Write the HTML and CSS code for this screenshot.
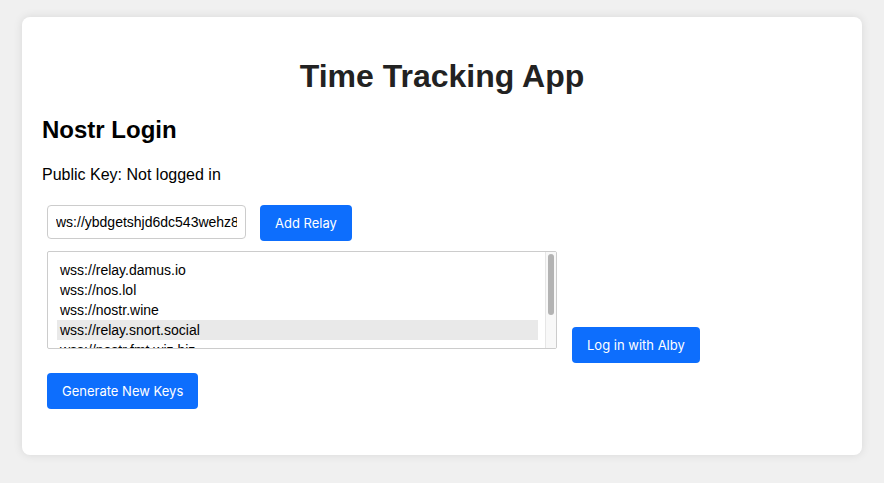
FILE: index.html
```html
<!DOCTYPE html>
<html lang="en">
<head>
  <meta charset="UTF-8">
  <meta name="viewport" content="width=device-width, initial-scale=1.0">
  <title>Time Tracking App</title>
  <link rel="stylesheet" href="styles.css">
</head>
<body>
<div class="container">
  <h1>Time Tracking App</h1>
  <div class="login">
    <h2>Nostr Login</h2>
    <p>Public Key: <span id="pubkey">Not logged in</span></p>
    <div class="relay-row">
      <input type="text" id="relay" value="ws://ybdgetshjd6dc543wehz83jd7">
      <button>Add Relay</button>
    </div>
    <div class="relay-row">
      <div class="relays">
        <div class="relay-list">
          <div class="relay">wss://relay.damus.io</div>
          <div class="relay">wss://nos.lol</div>
          <div class="relay">wss://nostr.wine</div>
          <div class="relay selected">wss://relay.snort.social</div>
          <div class="relay">wss://nostr.fmt.wiz.biz</div>
          <div class="relay">wss://relay.nostr.band</div>
          <div class="relay">wss://eden.nostr.land</div>
        </div>
        <div class="scrollbar"><div class="thumb"></div></div>
      </div>
      <button class="alby">Log in with Alby</button>
    </div>
    <button>Generate New Keys</button>
  </div>
</div>
</body>
</html>
```

FILE: styles.css
```css
body {
  font-family: "Liberation Sans", Arial, sans-serif;
  margin: 0;
  padding: 17px 22px;
  background-color: #f0f0f0;
}
.container {
  padding: 20px 20px 41px;
  background: white;
  border-radius: 8px;
  box-shadow: 0 0 10px rgba(0,0,0,0.1);
}
h1 { text-align: center; color: #222; font-size: 32px; margin: 21px 0; }
h2 { font-size: 24px; margin: 20px 0; }
p { margin: 22px 0 16px; }
.relay-row { display: flex; align-items: flex-start; }
input[type="text"] {
  width: 199px;
  box-sizing: border-box;
  margin: 5px;
  padding: 8px;
  font: 14px "Liberation Sans", Arial, sans-serif;
  border: 1px solid #ccc;
  border-radius: 4px;
}
button {
  margin: 5px 5px 5px 9px;
  padding: 10px 15px;
  height: 36px;
  background-color: #0d6efd;
  color: white;
  font: 13px "Inter", "Liberation Sans", sans-serif;
  border: none;
  border-radius: 4px;
  cursor: pointer;
}
.login > button { margin-left: 5px; }
.relay-row .alby { margin: 81px 5px 5px 10px; }
.relays {
  display: flex;
  width: 510px;
  height: 98px;
  box-sizing: border-box;
  margin: 5px;
  border: 1px solid #ccc;
  border-radius: 2px;
  overflow: hidden;
}
.relay-list {
  flex: 1;
  padding: 8px 7px 8px 9px;
  font-size: 14px;
}
.relay { height: 20px; line-height: 20px; padding: 0 3px; white-space: nowrap; }
.selected { background: #e9e9e9; }
.scrollbar {
  width: 11px;
  background: #f8f8f8;
  border-left: 1px solid #e6e6e6;
  padding: 2px 2px 0 2px;
  box-sizing: border-box;
}
.thumb { height: 61px; background: #b3b3b3; border-radius: 4px; }
```
